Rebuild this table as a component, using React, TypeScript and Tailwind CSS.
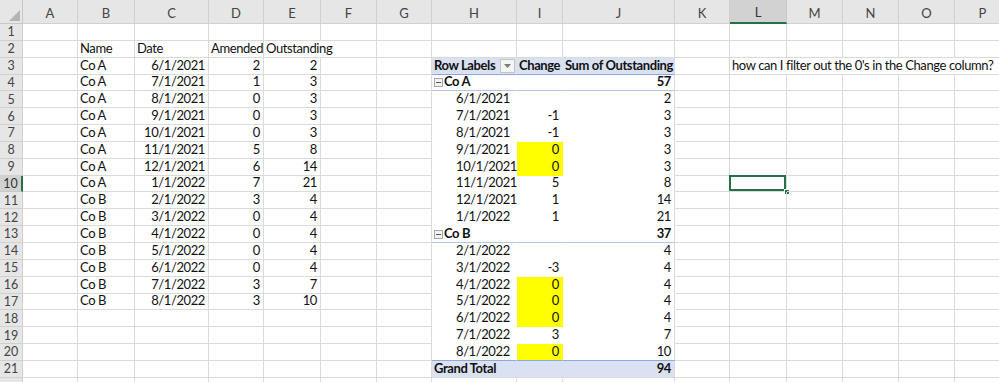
import React from "react";

type Cell = {
  v?: string;
  align?: "l" | "r";
  bold?: boolean;
  indent?: boolean;
  yellow?: boolean;
  toggle?: boolean;
  dropdown?: boolean;
};

const COLS = [
  { k: "A", w: "w-[55px]" },
  { k: "B", w: "w-[57px]" },
  { k: "C", w: "w-[74px]" },
  { k: "D", w: "w-[55px]" },
  { k: "E", w: "w-[57px]" },
  { k: "F", w: "w-[56px]" },
  { k: "G", w: "w-[55px]" },
  { k: "H", w: "w-[85px]" },
  { k: "I", w: "w-[46px]" },
  { k: "J", w: "w-[112px]" },
  { k: "K", w: "w-[55px]" },
  { k: "L", w: "w-[57px]" },
  { k: "M", w: "w-[56px]" },
  { k: "N", w: "w-[56px]" },
  { k: "O", w: "w-[56px]" },
  { k: "P", w: "w-[56px]" },
];

const source: [string, string, string, string][] = [
  ["Co A", "6/1/2021", "2", "2"],
  ["Co A", "7/1/2021", "1", "3"],
  ["Co A", "8/1/2021", "0", "3"],
  ["Co A", "9/1/2021", "0", "3"],
  ["Co A", "10/1/2021", "0", "3"],
  ["Co A", "11/1/2021", "5", "8"],
  ["Co A", "12/1/2021", "6", "14"],
  ["Co A", "1/1/2022", "7", "21"],
  ["Co B", "2/1/2022", "3", "4"],
  ["Co B", "3/1/2022", "0", "4"],
  ["Co B", "4/1/2022", "0", "4"],
  ["Co B", "5/1/2022", "0", "4"],
  ["Co B", "6/1/2022", "0", "4"],
  ["Co B", "7/1/2022", "3", "7"],
  ["Co B", "8/1/2022", "3", "10"],
];

// pivot body: label, change, sum, kind
const pivot: [string, string, string, "group" | "item" | "total"][] = [
  ["Co A", "", "57", "group"],
  ["6/1/2021", "", "2", "item"],
  ["7/1/2021", "-1", "3", "item"],
  ["8/1/2021", "-1", "3", "item"],
  ["9/1/2021", "0", "3", "item"],
  ["10/1/2021", "0", "3", "item"],
  ["11/1/2021", "5", "8", "item"],
  ["12/1/2021", "1", "14", "item"],
  ["1/1/2022", "1", "21", "item"],
  ["Co B", "", "37", "group"],
  ["2/1/2022", "", "4", "item"],
  ["3/1/2022", "-3", "4", "item"],
  ["4/1/2022", "0", "4", "item"],
  ["5/1/2022", "0", "4", "item"],
  ["6/1/2022", "0", "4", "item"],
  ["7/1/2022", "3", "7", "item"],
  ["8/1/2022", "0", "10", "item"],
  ["Grand Total", "", "94", "total"],
];

function buildSheet() {
  const rows: Record<string, Cell>[] = Array.from({ length: 22 }, () => ({}));
  rows[1] = {
    B: { v: "Name" },
    C: { v: "Date" },
    D: { v: "Amended" },
    E: { v: "Outstanding" },
  };
  source.forEach(([n, d, a, o], i) => {
    const r = rows[2 + i];
    r.B = { v: n };
    r.C = { v: d, align: "r" };
    r.D = { v: a, align: "r" };
    r.E = { v: o, align: "r" };
  });
  rows[2].H = { v: "Row Labels", bold: true, dropdown: true };
  rows[2].I = { v: "Change", bold: true };
  rows[2].J = { v: "Sum of Outstanding", bold: true };
  pivot.forEach(([label, ch, sum, kind], i) => {
    const r = rows[3 + i];
    const strong = kind !== "item";
    r.H = { v: label, bold: strong, indent: kind === "item", toggle: kind === "group" };
    r.I = { v: ch, align: "r", yellow: ch === "0" };
    r.J = { v: sum, align: "r", bold: strong };
  });
  rows[2].L = { v: "how can I filter out the 0's in the Change column?" };
  return rows;
}

const sheet = buildSheet();
const pivotCols = ["H", "I", "J"];

function cellBorder(row: number, col: string) {
  const inPivot = row >= 2 && row <= 20 && pivotCols.includes(col);
  if (inPivot) {
    const kind = row === 2 ? "head" : pivot[row - 3][3];
    const right = col === "J" ? "border-r-[#dadada]" : "border-r-transparent";
    if (kind === "head") return `bg-[#d9e1f2] border-b-[#8ea9db] ${right}`;
    if (kind === "total") return `bg-[#d9e1f2] border-b-[#dadada] ${right}`;
    if (kind === "group") return `bg-white border-b-[#b4c6e7] ${right}`;
    const next = row < 20 ? pivot[row - 2][3] : "item";
    return `bg-white ${next === "total" ? "border-b-[#8ea9db]" : "border-b-transparent"} ${right}`;
  }
  // text spilling over from L3, E2
  if (row === 2 && ["L", "M", "N", "O"].includes(col)) return "border-b-[#dadada] border-r-transparent";
  if (row === 1 && col === "E") return "border-b-[#dadada] border-r-transparent";
  return "border-b-[#dadada] border-r-[#dadada]";
}

function SheetCell({ row, col, w }: { row: number; col: string; w: string }) {
  const c = sheet[row][col];
  const selected = row === 9 && col === "L";
  return (
    <div
      className={`relative ${w} h-full shrink-0 border-b border-r ${cellBorder(row, col)} flex items-end ${
        c?.align === "r" ? "justify-end pr-[3px]" : "pl-[2px]"
      } ${c?.yellow ? "!bg-[#ffff00]" : ""}`}
    >
      {c?.toggle && (
        <span className="mr-[1px] mb-[3px] flex h-[9px] w-[9px] items-center justify-center border border-[#a6a6a6] bg-[#f2f2f2]">
          <span className="h-[1px] w-[5px] bg-[#595959]" />
        </span>
      )}
      {c?.v && (
        <span
          className={`whitespace-nowrap leading-none pb-[2px] ${c.bold ? "font-bold" : ""} ${c.indent ? "pl-[22px]" : ""}`}
        >
          {c.v}
        </span>
      )}
      {c?.dropdown && (
        <span className="absolute right-[1px] bottom-[1px] flex h-[14px] w-[15px] items-center justify-center border border-[#c6c6c6] bg-[#f4f4f4]">
          <svg width="7" height="4" viewBox="0 0 7 4">
            <path d="M0 0h7L3.5 4z" fill="#7a7a7a" />
          </svg>
        </span>
      )}
      {selected && (
        <>
          <span className="pointer-events-none absolute -left-[1px] -top-[1px] h-[calc(100%+1px)] w-[calc(100%+1px)] border-2 border-[#217346]" />
          <span className="absolute -right-[4px] -bottom-[4px] h-[6px] w-[6px] border border-white bg-[#217346]" />
        </>
      )}
    </div>
  );
}

export default function App() {
  return (
    <div
      className="h-[382px] w-[999px] overflow-hidden bg-white text-[13px] tracking-[-0.4px] text-[#111]"
      style={{ fontFamily: "Lato, 'Noto Sans', sans-serif" }}
    >
      {/* column letters */}
      <div className="flex h-[24px] bg-[#e6e6e6]">
        <div className="relative w-[23px] shrink-0 border-r border-b border-[#c8c8c8]">
          <svg className="absolute right-[2px] bottom-[2px]" width="11" height="11" viewBox="0 0 11 11">
            <path d="M11 0V11H0z" fill="#b4b4b4" />
          </svg>
        </div>
        {COLS.map(({ k, w }) => (
          <div
            key={k}
            className={`${w} shrink-0 flex items-end justify-center pb-[3px] text-[13px] leading-none tracking-normal ${
              k === "L"
                ? "bg-[#d2d2d2] border-b-2 border-b-[#217346] border-r border-r-[#c8c8c8] text-[#333]"
                : "border-r border-b border-[#d0d0d0] text-[#444]"
            }`}
          >
            {k}
          </div>
        ))}
      </div>
      {sheet.map((_, r) => (
        <div key={r} className="flex h-[16.85px]">
          <div
            className={`w-[23px] shrink-0 flex items-end justify-center pb-[1px] text-[12.5px] leading-none tracking-normal ${
              r === 9
                ? "bg-[#d2d2d2] border-r-2 border-r-[#217346] border-b border-b-[#c8c8c8] text-[#333]"
                : "bg-[#e6e6e6] border-r border-b border-[#d0d0d0] text-[#444]"
            }`}
          >
            {r < 21 ? r + 1 : ""}
          </div>
          {COLS.map(({ k, w }) => (
            <SheetCell key={k} row={r} col={k} w={w} />
          ))}
        </div>
      ))}
    </div>
  );
}
